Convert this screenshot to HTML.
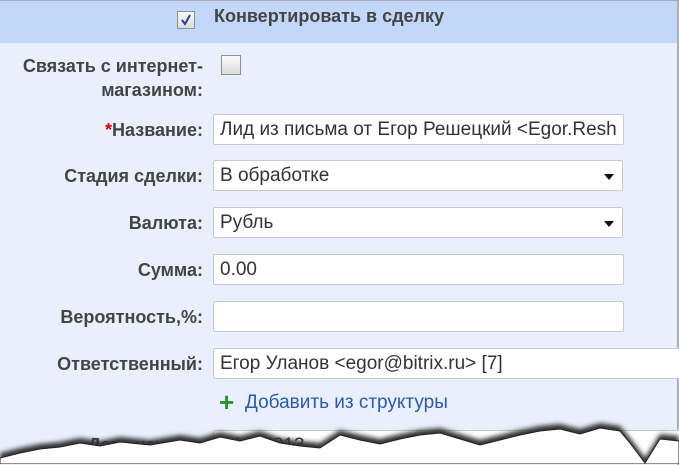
<!DOCTYPE html>
<html><head><meta charset="utf-8"><style>
body{margin:0;width:679px;height:464px;overflow:hidden;background:#fff;font-family:"Liberation Sans",Arial,sans-serif;position:relative}
.frame{position:absolute;left:0;top:0;width:677px;height:464px;background:#e9effd;border-top:1px solid #a9b0bb;border-right:2px solid #a9b0bb}
.hdr{position:absolute;left:0;top:1px;width:677px;height:42px;background:#c3d7f8}
.lbl{position:absolute;right:476px;font-size:18px;font-weight:bold;color:#444;text-align:right;white-space:nowrap;line-height:24px}
.inp{position:absolute;left:213px;height:31px;background:#fff;border:1px solid #c6c9cf;border-radius:2px;box-sizing:border-box;font-size:19px;color:#333;line-height:29px;padding-left:6px;white-space:nowrap;overflow:hidden}
.arr{position:absolute;right:8px;top:13px;width:0;height:0;border-left:5px solid transparent;border-right:5px solid transparent;border-top:6px solid #111}
.cb{position:absolute;width:16px;height:16px;border:1px solid #8c8f96;background:linear-gradient(#fafafa,#dcdcdc);box-sizing:border-box}
</style></head><body>
<div class="frame"></div>
<div class="hdr"></div>
<div class="cb" style="left:177px;top:11px;width:18px;height:18px"><svg width="16" height="16" style="position:absolute;left:0;top:0"><path d="M4 8 L7 12 L12 3" stroke="#2a3e9a" stroke-width="2" fill="none"/></svg></div>
<div style="position:absolute;left:214px;top:6px;font-size:18px;font-weight:bold;color:#444">Конвертировать в сделку</div>
<div class="lbl" style="top:54px">Связать с интернет-<br>магазином:</div>
<div class="cb" style="left:221px;top:55px;width:20px;height:20px"></div>
<div class="lbl" style="top:118px"><span style="color:#d00">*</span>Название:</div>
<div class="inp" style="top:114px;width:411px">Лид из письма от Егор Решецкий &lt;Egor.Resh</div>
<div class="lbl" style="top:164px">Стадия сделки:</div>
<div class="inp" style="top:160px;width:410px">В обработке<div class="arr"></div></div>
<div class="lbl" style="top:211px">Валюта:</div>
<div class="inp" style="top:207px;width:410px">Рубль<div class="arr"></div></div>
<div class="lbl" style="top:258px">Сумма:</div>
<div class="inp" style="top:254px;width:411px">0.00</div>
<div class="lbl" style="top:305px">Вероятность,%:</div>
<div class="inp" style="top:301px;width:411px"></div>
<div class="lbl" style="top:352px">Ответственный:</div>
<div class="inp" style="top:348px;width:470px">Егор Уланов &lt;egor@bitrix.ru&gt; [7]</div>
<div style="position:absolute;left:219px;top:391px;font-size:26px;font-weight:bold;color:#2e8f2e;line-height:22px">+</div>
<div style="position:absolute;left:245px;top:392px;font-size:19px;color:#2d5aa8">Добавить из структуры</div>
<div class="inp" style="top:430px;width:470px">14.0 2013</div>
<div class="lbl" style="top:433px">Дата начала:</div>
<svg width="679" height="464" style="position:absolute;left:0;top:0">
<defs><filter id="s"><feGaussianBlur stdDeviation="2.5"/></filter></defs>
<path d="M0 464 L0 453 L20 448 L40 444 L60 442 L80 438 L100 441 L120 437 L150 440 L180 435 L200 438 L220 432 L240 436 L260 431 L280 438 L300 441 L320 443 L340 430 L360 435 L380 439 L400 434 L420 430 L440 428 L460 434 L480 440 L500 435 L520 430 L540 426 L560 424 L580 429 L600 423 L620 426 L630 438 L645 458 L660 434 L679 436 L679 464 Z" fill="#333" filter="url(#s)"/>
<path d="M0 464 L0 458 L20 453 L40 449 L60 447 L80 443 L100 446 L120 442 L150 445 L180 440 L200 443 L220 437 L240 441 L260 436 L280 443 L300 446 L320 448 L340 435 L360 440 L380 444 L400 439 L420 435 L440 433 L460 439 L480 445 L500 440 L520 435 L540 431 L560 429 L580 434 L600 428 L620 431 L630 443 L645 463 L660 439 L679 441 L679 464 Z" fill="#fff" stroke="#222" stroke-width="1"/>
</svg>
</body></html>
